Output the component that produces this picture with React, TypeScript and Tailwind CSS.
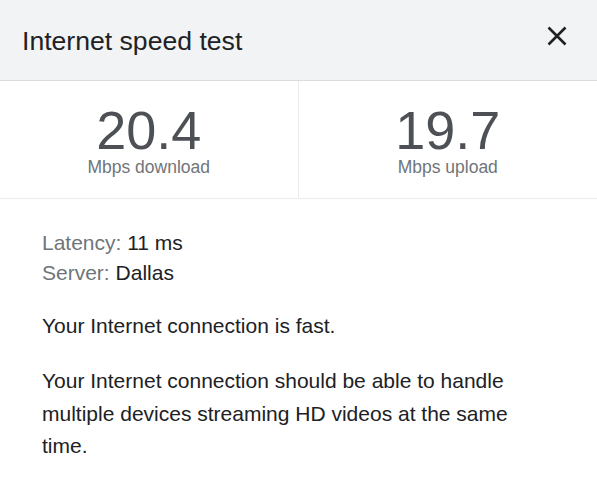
export default function App() {
  return (
    <div className="h-[482px] w-[597px] bg-white font-['Liberation_Sans','Arial',sans-serif]">
      {/* Header */}
      <div className="flex h-[81px] items-center justify-between border-b border-[#dadce0] bg-[#f1f3f4] pl-[22px] pr-[30px]">
        <h1 className="pt-[4px] text-[26.6px] font-normal text-[#202124]">Internet speed test</h1>
        <svg width="20" height="20" viewBox="0 0 20 20" className="mb-[8px]" aria-label="Close">
          <path d="M1.5 1.5L18.5 18.5M18.5 1.5L1.5 18.5" stroke="#202124" strokeWidth="2.6" strokeLinecap="butt" />
        </svg>
      </div>

      {/* Stats */}
      <div className="grid h-[118px] grid-cols-2 border-b border-[#ececec]">
        <div className="flex flex-col items-center border-r border-[#ececec] pt-[23px]">
          <div className="text-[54px] leading-[53px] text-[#4d5156]">20.4</div>
          <div className="text-[17.5px] leading-[20px] text-[#70757a]">Mbps download</div>
        </div>
        <div className="flex flex-col items-center pt-[23px]">
          <div className="text-[54px] leading-[53px] text-[#4d5156]">19.7</div>
          <div className="text-[17.5px] leading-[20px] text-[#70757a]">Mbps upload</div>
        </div>
      </div>

      {/* Details */}
      <div className="px-[42px] pt-[29px] text-[21px] text-[#202124]">
        <div className="leading-[30px]">
          <span className="text-[#70757a]">Latency: </span>11 ms
        </div>
        <div className="leading-[30px]">
          <span className="text-[#70757a]">Server: </span>Dallas
        </div>
        <p className="mt-[22px] leading-[32px]">Your Internet connection is fast.</p>
        <p className="mt-[23px] max-w-[500px] leading-[32.5px]">
          Your Internet connection should be able to handle multiple devices streaming HD videos at the same time.
        </p>
      </div>
    </div>
  );
}
